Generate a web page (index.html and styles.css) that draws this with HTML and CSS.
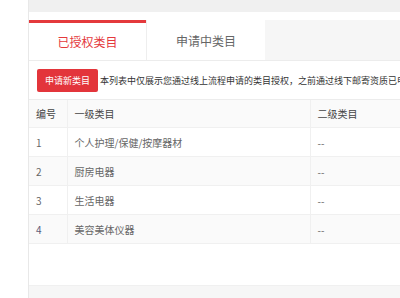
FILE: index.html
```html
<!DOCTYPE html>
<html lang="zh">
<head>
<meta charset="utf-8">
<link rel="stylesheet" href="styles.css">
</head>
<body>
<div class="page">
  <div class="topbar"></div>
  <div class="spacer"></div>
  <div class="tabs">
    <div class="tab active">已授权类目</div>
    <div class="tab">申请中类目</div>
  </div>
  <div class="toolbar">
    <button class="btn">申请新类目</button>
    <span class="desc">本列表中仅展示您通过线上流程申请的类目授权，之前通过线下邮寄资质已申请的类目授权请联系客服查询</span>
  </div>
  <table class="grid">
    <colgroup><col class="c1"><col class="c2"><col class="c3"></colgroup>
    <thead>
      <tr><th>编号</th><th>一级类目</th><th>二级类目</th></tr>
    </thead>
    <tbody>
      <tr><td>1</td><td>个人护理/保健/按摩器材</td><td>--</td></tr>
      <tr class="alt"><td>2</td><td>厨房电器</td><td>--</td></tr>
      <tr><td>3</td><td>生活电器</td><td>--</td></tr>
      <tr class="alt"><td class="num4">4</td><td>美容美体仪器</td><td>--</td></tr>
    </tbody>
  </table>
  <div class="blank"></div>
  <div class="footer"></div>
</div>
</body>
</html>
```
FILE: styles.css
```css
html, body {
  margin: 0;
  padding: 0;
  background: #fff;
  overflow: hidden;
}
body {
  font-family: "Noto Sans CJK SC", "Noto Sans", sans-serif;
  width: 400px;
  height: 298px;
}
.page {
  margin-left: 28px;
  border-left: 1px solid #e8e8e8;
  width: 500px;
  height: 298px;
}
.topbar {
  height: 12px;
  background: #f0f0f0;
}
.spacer {
  height: 8px;
}
.tabs {
  display: flex;
  height: 40px;
  background: #f6f6f6;
  border-bottom: 1px solid #ececec;
}
.tab {
  width: 118px;
  display: flex;
  align-items: center;
  justify-content: center;
  background: #fff;
  color: #666;
  font-size: 12px;
  border-left: 1px solid #eee;
}
.tab.active {
  width: 117px;
  border-left: none;
  border-top: 3px solid #e4393c;
  color: #e4393c;
}
.toolbar {
  height: 38px;
  display: flex;
  align-items: center;
  padding-left: 8px;
  white-space: nowrap;
  overflow: hidden;
  border-bottom: 1px solid #ececec;
}
.btn {
  width: 61px;
  height: 23px;
  margin: 0 2px 0 0;
  padding: 0;
  border: none;
  border-radius: 2px;
  background: #e3353b;
  color: #fff;
  font-family: inherit;
  font-size: 9px;
  flex: none;
}
.desc {
  font-size: 9px;
  color: #333;
}
.grid {
  border-collapse: collapse;
  table-layout: fixed;
  width: 500px;
  font-size: 10px;
  color: #666;
}
.c1 { width: 38px; }
.c2 { width: 243px; }
.grid th, .grid td {
  text-align: left;
  font-weight: normal;
  padding: 0 0 0 7px;
  border-bottom: 1px solid #f0f0f0;
  border-right: 1px solid #f0f0f0;
}
.grid th {
  height: 27px;
  background: #fafafa;
  color: #444;
}
.grid td {
  height: 28px;
}
.grid tr.alt td {
  background: #fafafa;
}
.grid tr td:last-child, .grid tr th:last-child {
  border-right: none;
}
.grid .num4 {
  color: #5a5a78;
}
.blank {
  height: 41px;
}
.footer {
  height: 20px;
  background: #f6f6f6;
  border-top: 1px solid #f0f0f0;
}
```
